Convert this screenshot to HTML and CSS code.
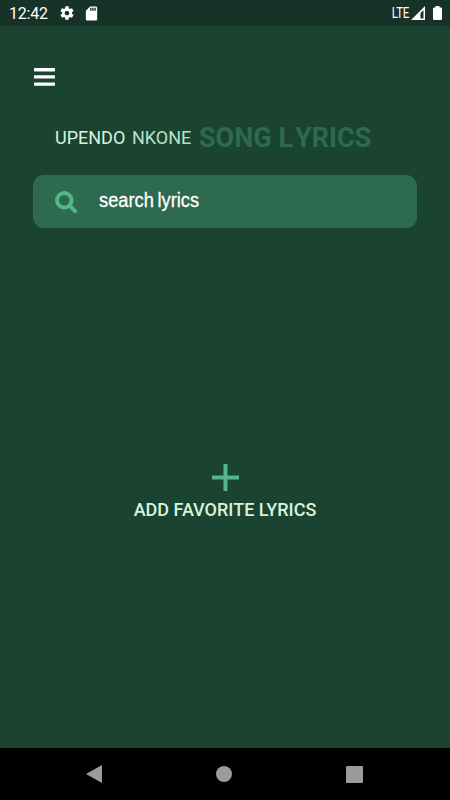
FILE: index.html
```html
<!DOCTYPE html>
<html lang="en">
<head>
    <meta charset="UTF-8">
    <meta name="viewport" content="width=device-width, initial-scale=1.0">
    <title>Upendo Nkone Song Lyrics</title>
    <link rel="stylesheet" href="styles.css">
</head>
<body>
    <div class="status-bar">
        <span class="time">12:42</span>
        <svg class="gear" width="16" height="16" viewBox="0 0 24 24"><path fill="#fff" d="M19.43 12.98c.04-.32.07-.64.07-.98s-.03-.66-.07-.98l2.11-1.65c.19-.15.24-.42.12-.64l-2-3.46c-.12-.22-.39-.3-.61-.22l-2.49 1c-.52-.4-1.08-.73-1.69-.98l-.38-2.65C14.46 2.18 14.25 2 14 2h-4c-.25 0-.46.18-.49.42l-.38 2.65c-.61.25-1.17.59-1.69.98l-2.49-1c-.23-.09-.49 0-.61.22l-2 3.46c-.13.22-.07.49.12.64l2.11 1.65c-.04.32-.07.65-.07.98s.03.66.07.98l-2.11 1.65c-.19.15-.24.42-.12.64l2 3.46c.12.22.39.3.61.22l2.49-1c.52.4 1.08.73 1.69.98l.38 2.65c.03.24.24.42.49.42h4c.25 0 .46-.18.49-.42l.38-2.65c.61-.25 1.17-.59 1.69-.98l2.49 1c.23.09.49 0 .61-.22l2-3.46c.12-.22.07-.49-.12-.64l-2.11-1.65zM12 15.5c-1.93 0-3.5-1.57-3.5-3.5s1.57-3.5 3.5-3.5 3.5 1.57 3.5 3.5-1.57 3.5-3.5 3.5z"/></svg>
        <svg class="sd-card" width="17" height="17" viewBox="0 0 24 24"><path fill="#fff" d="M18 2h-8L4.02 8 4 20c0 1.100.9 2 2 2h12c1.100 0 2-.9 2-2V4c0-1.100-.9-2-2-2zm-6 6h-2V4h2v4zm3 0h-2V4h2v4zm3 0h-2V4h2v4z"/></svg>
        <span class="network">LTE</span>
        <svg class="signal" width="14" height="14" viewBox="0 0 14 14"><path fill="#fff" fill-rule="evenodd" d="M0 14L14 0V14ZM9.500 12.500H12.500V4L9.500 7Z"/></svg>
        <svg class="battery" width="9" height="14" viewBox="0 0 9 14"><path fill="#fff" d="M2.500 0h4v1.500H8q1 0 1 1V13q0 1-1 1H1q-1 0-1-1V2.500q0-1 1-1h1.500z"/></svg>
    </div>

    <div class="container">
        <button class="menu-button" aria-label="Menu">
            <svg width="21" height="18" viewBox="0 0 21 18"><path fill="#fff" d="M.7 0h19.600q.7 0 .7.700v2q0 .7-.7.700H.7q-.7 0-.7-.7v-2Q0 0 .7 0zM.7 7.200h19.600q.7 0 .7.700v2q0 .7-.7.700H.7q-.7 0-.7-.7v-2q0-.7.700-.7zM.7 14.400h19.600q.7 0 .7.700v2q0 .7-.7.700H.7q-.7 0-.7-.7v-2q0-.7.700-.7z"/></svg>
        </button>

        <h1 class="title">
            <span class="first-name">UPENDO</span>
            <span class="last-name">NKONE</span>
            <span class="song">SONG <span class="wide">L</span>YRICS</span>
        </h1>

        <div class="search-box">
            <svg width="23" height="23" viewBox="0 0 23 23"><g fill="none" stroke="#52b788" stroke-width="3.900"><circle cx="9.300" cy="9.300" r="7.300"/><path d="M14.500 14.500L21.300 21.300"/></g></svg>
            <span class="placeholder">search lyrics</span>
        </div>

        <div class="favorites">
            <svg width="27" height="27" viewBox="0 0 27 27"><path fill="#52b788" d="M11.500 0h4v11.500H27v4H15.500V27h-4V15.500H0v-4h11.500z"/></svg>
            <p>ADD FAVORITE LYRICS</p>
        </div>
    </div>

    <div class="nav-bar">
        <svg width="16" height="18" viewBox="0 0 16 18"><path fill="#9b9b9b" d="M0 9L16 0V18Z"/></svg>
        <svg width="16" height="16" viewBox="0 0 16 16"><circle fill="#9b9b9b" cx="8" cy="8" r="8"/></svg>
        <svg width="17" height="17" viewBox="0 0 17 17"><rect fill="#9b9b9b" width="17" height="17" rx="1"/></svg>
    </div>
</body>
</html>
```
FILE: styles.css
```css
body {
    font-family: Roboto, sans-serif;
    margin: 0;
    height: 100vh;
    display: flex;
    flex-direction: column;
    background-color: #1b4332;
    color: white;
    overflow: hidden;
}
svg {
    display: block;
    flex-shrink: 0;
}
.status-bar {
    display: flex;
    align-items: center;
    box-sizing: border-box;
    height: 26px;
    padding: 0 8px 0 9px;
    background-color: #173328;
}
.time {
    width: 50px;
    padding-top: 2px;
    font-size: 16px;
    line-height: 20px;
    letter-spacing: -0.2px;
}
.sd-card {
    margin-left: 8px;
}
.network {
    margin-left: auto;
    font-size: 14px;
    letter-spacing: -0.3px;
    transform: scaleX(0.82);
    transform-origin: right;
}
.signal {
    margin-left: 2px;
}
.battery {
    margin-left: 8px;
}
.container {
    flex: 1;
    display: flex;
    flex-direction: column;
    padding: 42px 33px 0;
}
.menu-button {
    align-self: flex-start;
    padding: 0;
    margin-left: 1px;
    border: none;
    background: none;
    cursor: pointer;
}
.title {
    display: flex;
    align-items: center;
    height: 32px;
    margin: 35px 0 0 22px;
    font-size: 18px;
    font-weight: 400;
    white-space: nowrap;
}
.first-name {
    width: 77px;
    color: #d8f3dc;
}
.last-name {
    width: 67px;
    color: #b7e4c7;
}
.song {
    padding-top: 2px;
    font-size: 27px;
    font-weight: 700;
    font-kerning: none;
    color: #2d6a4f;
}
.wide {
    letter-spacing: 2px;
}
.search-box {
    display: flex;
    align-items: center;
    box-sizing: border-box;
    height: 53px;
    margin-top: 22px;
    padding: 2px 22px 0;
    background-color: #2d6a4f;
    border-radius: 11px;
}
.placeholder {
    margin: 0 0 5px 21px;
    font-family: "Liberation Sans", sans-serif;
    font-size: 20px;
    word-spacing: -1.5px;
    transform: scaleX(0.913);
    transform-origin: left;
    -webkit-text-stroke: 0.3px white;
}
.favorites {
    display: flex;
    flex-direction: column;
    align-items: center;
    margin-top: 236px;
}
.favorites p {
    margin: 8px 0 0;
    font-size: 18px;
    font-weight: 500;
    line-height: 21px;
    color: #d8f3dc;
}
.nav-bar {
    display: flex;
    align-items: center;
    justify-content: space-between;
    box-sizing: border-box;
    height: 52px;
    padding: 0 87px 0 86px;
    background-color: black;
}
```
